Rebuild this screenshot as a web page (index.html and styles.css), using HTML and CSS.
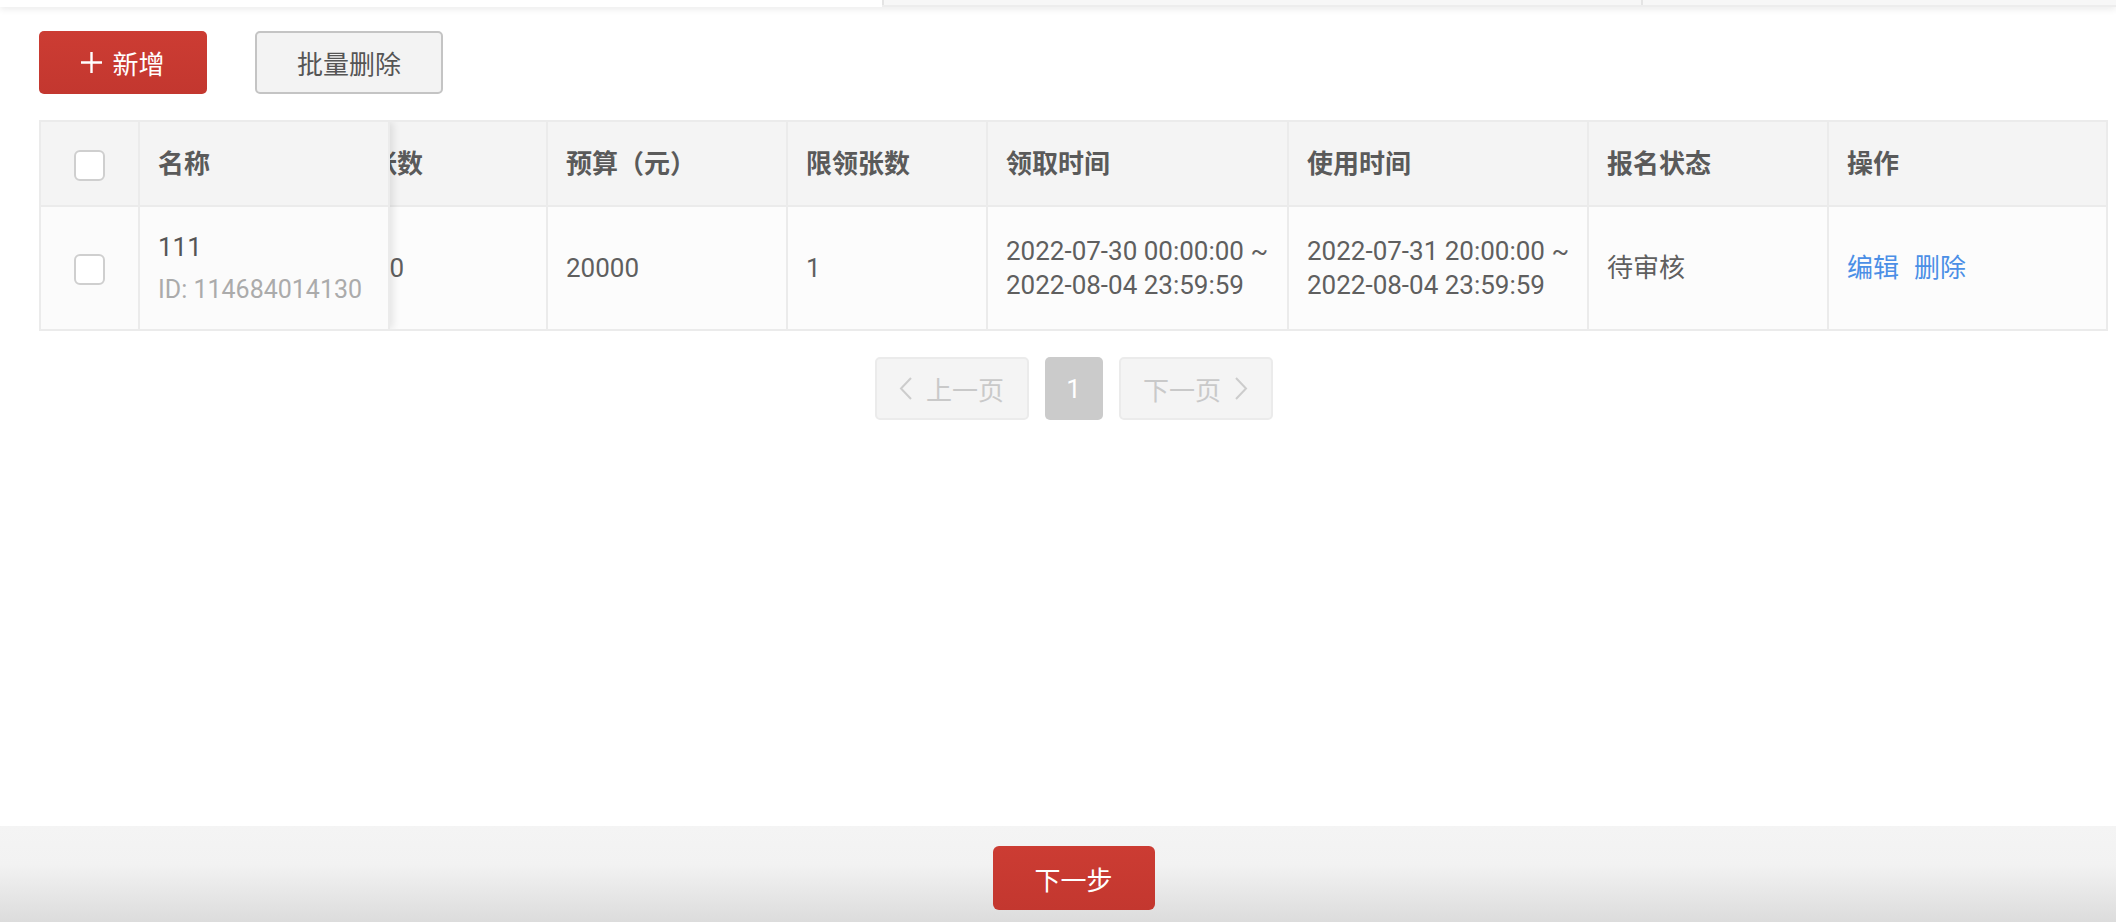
FILE: index.html
```html
<!DOCTYPE html>
<html lang="zh-CN">
<head>
    <meta charset="UTF-8">
    <meta name="viewport" content="width=device-width, initial-scale=1.0">
    <title>优惠券列表</title>
    <link rel="stylesheet" href="styles.css">
</head>
<body>
    <div class="page">
        <!-- tab strip, scrolled so only its bottom edge shows -->
        <div class="tabbar">
            <div class="tab tab-active"></div>
            <div class="tab tab-mid"></div>
            <div class="tab tab-last"></div>
        </div>

        <div class="main">
            <div class="toolbar">
                <button class="btn btn-primary">
                    <svg class="icon-plus" viewBox="0 0 21 21" width="21" height="21">
                        <path d="M10.5 0 V21 M0 10.5 H21" stroke="#fff" stroke-width="2.4" fill="none"/>
                    </svg>
                    <span>新增</span>
                </button>
                <button class="btn btn-default">批量删除</button>
            </div>

            <div class="table-wrap">
                <!-- scrolled part; the first two cells sit under the fixed columns -->
                <table class="grid grid-scroll">
                    <thead>
                        <tr>
                            <th class="c-check"></th>
                            <th class="c-name"></th>
                            <th class="c-count">发放张数</th>
                            <th class="c-budget">预算（元）</th>
                            <th class="c-limit">限领张数</th>
                            <th class="c-get">领取时间</th>
                            <th class="c-use">使用时间</th>
                            <th class="c-status">报名状态</th>
                            <th class="c-ops">操作</th>
                        </tr>
                    </thead>
                    <tbody>
                        <tr>
                            <td class="c-check"></td>
                            <td class="c-name"></td>
                            <td class="c-count">10000</td>
                            <td class="c-budget">20000</td>
                            <td class="c-limit">1</td>
                            <td class="c-get">2022-07-30 00:00:00 ~<br>2022-08-04 23:59:59</td>
                            <td class="c-use">2022-07-31 20:00:00 ~<br>2022-08-04 23:59:59</td>
                            <td class="c-status">待审核</td>
                            <td class="c-ops"><a class="link">编辑</a><a class="link">删除</a></td>
                        </tr>
                    </tbody>
                </table>

                <!-- fixed left columns laid over the scrolled table -->
                <table class="grid grid-fixed">
                    <thead>
                        <tr>
                            <th class="c-check"><span class="checkbox"></span></th>
                            <th class="c-name">名称</th>
                        </tr>
                    </thead>
                    <tbody>
                        <tr>
                            <td class="c-check"><span class="checkbox"></span></td>
                            <td class="c-name">
                                <div class="coupon-name">111</div>
                                <div class="coupon-id">ID: 114684014130</div>
                            </td>
                        </tr>
                    </tbody>
                </table>
            </div>

            <div class="pager">
                <button class="pager-btn" disabled>
                    <svg viewBox="0 0 13 23" width="13" height="23"><polyline points="12,1 2,11.5 12,22" stroke="#cccccc" stroke-width="2" fill="none"/></svg>
                    <span>上一页</span>
                </button>
                <span class="pager-num">1</span>
                <button class="pager-btn" disabled>
                    <span>下一页</span>
                    <svg viewBox="0 0 13 23" width="13" height="23"><polyline points="1,1 11,11.5 1,22" stroke="#cccccc" stroke-width="2" fill="none"/></svg>
                </button>
            </div>
        </div>

        <div class="footer">
            <button class="btn btn-primary btn-next">下一步</button>
        </div>
    </div>
</body>
</html>
```

FILE: styles.css
```css
* {
    box-sizing: border-box;
}

body {
    margin: 0;
    font-family: Roboto, "Noto Sans CJK SC", sans-serif;
    font-size: 26px;
    color: #5f5f5f;
    background: #fff;
}

.page {
    display: flex;
    flex-direction: column;
    min-height: 100vh;
}

/* tab strip */
.tabbar {
    display: flex;
    align-items: flex-start;
    height: 7px;
    background: #ededed;
    box-shadow: 0 2px 7px rgba(0, 0, 0, 0.09);
    position: relative;
    z-index: 2;
}
.tab {
    height: 5px;
    background: #f7f7f7;
}
.tab-active {
    width: 882px;
    height: 7px;
    background: #fff;
}
.tab-mid {
    width: 759px;
    border-left: 2px solid #e4e4e4;
}
.tab-last {
    flex: 1;
    border-left: 2px solid #e4e4e4;
}

.main {
    padding: 0 8px 0 39px;
}

/* buttons */
.btn {
    font-family: inherit;
    font-size: 26px;
    height: 63px;
    border-radius: 5px;
    cursor: pointer;
    display: inline-flex;
    align-items: center;
    justify-content: center;
}
.btn-primary {
    background: linear-gradient(#cc3c33, #c3372f);
    border: none;
    color: #fff;
}
.btn-default {
    background: #f3f3f3;
    border: 2px solid #c4c4c4;
    color: #555;
}

.toolbar {
    display: flex;
    gap: 48px;
    margin-top: 24px;
}
.toolbar .btn-primary {
    width: 168px;
    gap: 10px;
}
.toolbar .btn-default {
    width: 188px;
}

/* table */
.table-wrap {
    position: relative;
    overflow: hidden;
    margin-top: 26px;
    border: 2px solid #ebebeb;
}

.grid {
    border-collapse: separate;
    border-spacing: 0;
    table-layout: fixed;
}
.grid th,
.grid td {
    padding: 0 18px;
    text-align: left;
    vertical-align: middle;
    border-right: 2px solid #ebebeb;
    line-height: 34px;
    white-space: nowrap;
    overflow: hidden;
}
.grid th {
    height: 85px;
    background: #f4f4f4;
    border-bottom: 2px solid #ebebeb;
    font-weight: bold;
    color: #5a5a5a;
}
.grid td {
    height: 122px;
    background: #fcfcfc;
}

.grid-scroll {
    width: 2154px;
    margin-left: -89px;
}
.grid-scroll td.c-count {
    padding-left: 30px;
}
.grid-scroll .c-ops {
    border-right: none;
}

.grid-fixed {
    position: absolute;
    top: 0;
    left: 0;
    width: 349px;
    box-shadow: 3px 0 8px rgba(0, 0, 0, 0.1);
}
.grid-fixed td {
    background: #fbfbfb;
}

.c-check { width: 99px; text-align: center !important; padding: 0 !important; }
.c-name { width: 250px; }
.c-count { width: 247px; }
.c-budget { width: 240px; }
.c-limit { width: 200px; }
.c-get { width: 301px; }
.c-use { width: 300px; }
.c-status { width: 240px; }
.c-ops { width: 277px; }

.checkbox {
    display: inline-block;
    width: 31px;
    height: 31px;
    border: 2px solid #cfcfcf;
    border-radius: 6px;
    background: #fff;
    vertical-align: middle;
}

.coupon-name {
    color: #555;
}
.coupon-id {
    margin-top: 9px;
    font-size: 25px;
    color: #ababab;
}

.link {
    color: #4b8fe6;
    cursor: pointer;
    margin-right: 15px;
}

/* pagination */
.pager {
    display: flex;
    justify-content: center;
    gap: 16px;
    margin-top: 26px;
}
.pager-btn {
    width: 154px;
    height: 63px;
    font-family: inherit;
    font-size: 26px;
    color: #c9c9c9;
    background: #f4f4f4;
    border: 2px solid #ebebeb;
    border-radius: 5px;
    display: flex;
    align-items: center;
    justify-content: center;
    gap: 14px;
    padding: 0;
}
.pager-num {
    width: 58px;
    height: 63px;
    border-radius: 5px;
    background: #cbcbcb;
    color: #fff;
    display: flex;
    align-items: center;
    justify-content: center;
}

/* bottom bar */
.footer {
    margin-top: auto;
    height: 96px;
    padding: 20px 8px 0 39px;
    display: flex;
    justify-content: center;
    align-items: flex-start;
    background: linear-gradient(#f4f4f4 0%, #f2f2f2 40%, #dcdcdc 100%);
}
.btn-next {
    width: 162px;
    height: 64px;
    border-radius: 6px;
}
```
